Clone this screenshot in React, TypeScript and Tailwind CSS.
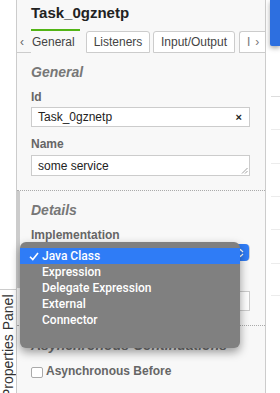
import React from "react";

const font = { fontFamily: '"Liberation Sans", Arial, sans-serif' };

function Label({ children }: { children: React.ReactNode }) {
  return <div className="text-[12px] font-bold leading-[16px] text-[#666]">{children}</div>;
}

function Heading({ children }: { children: React.ReactNode }) {
  return <div className="text-[14px] font-bold italic leading-[20px] text-[#777]">{children}</div>;
}

const options = ["Java Class", "Expression", "Delegate Expression", "External", "Connector"];

export default function App() {
  return (
    <div className="relative flex h-[393px] w-[280px] overflow-hidden bg-white" style={font}>
      {/* left strip with toggle tab */}
      <div className="flex w-[16px] flex-col">
        <div className="flex-1" />
        <div className="h-[104px] overflow-hidden border-t border-[#ccc] bg-white">
          <div className="h-[108px] rotate-180 text-[14px] leading-[16px] text-[#333] [writing-mode:vertical-rl]">
            Properties Panel
          </div>
        </div>
      </div>

      {/* panel */}
      <div className="flex w-[250px] flex-col border-x border-[#ccc] bg-[#f8f8f8]">
        <div className="pl-[14px] pt-[3px] text-[15px] font-bold leading-[20px] text-[#222]">Task_0gznetp</div>

        {/* tabs */}
        <div className="mt-[6px] flex h-[24px] items-end text-[12px] leading-[14px] text-[#444]">
          <div className="flex h-[22px] w-[14px] items-center border-b border-[#ccc] pl-[3px] text-[#666]">‹</div>
          <div className="flex h-[24px] w-[49px] items-center border-t-2 border-[#52b415] pl-[1px]">General</div>
          <div className="ml-[6px] flex h-[22px] w-[64px] items-center justify-center rounded-t-[3px] border border-[#ccc] bg-white">Listeners</div>
          <div className="ml-[3px] flex h-[22px] w-[82px] items-center justify-center rounded-t-[3px] border border-[#ccc] bg-white">Input/Output</div>
          <div className="ml-[4px] flex h-[22px] flex-1 items-center rounded-tl-[3px] border-y border-l border-[#ccc] bg-white pl-[7px] text-[#777]">
            <span>I</span>
            <span className="ml-[5px]">›</span>
          </div>
        </div>

        {/* General group */}
        <div className="border-b border-dotted border-[#aaa] pb-[14px] pl-[14px] pr-[15px]">
          <div className="mt-[9px]">
            <Heading>General</Heading>
          </div>
          <div className="mt-[7px]">
            <Label>Id</Label>
          </div>
          <div className="mt-[2px] flex h-[20px] items-center justify-between border border-[#ccc] bg-white pl-[6px] pr-[7px] text-[12px] text-[#222]">
            <span>Task_0gznetp</span>
            <span className="text-[11px] font-bold">×</span>
          </div>
          <div className="mt-[9px]">
            <Label>Name</Label>
          </div>
          <div className="relative mt-[3px] flex h-[21px] items-center border border-[#ccc] bg-white pl-[6px] text-[12px] text-[#222]">
            <span>some service</span>
            <svg className="absolute bottom-[1px] right-[1px]" width="7" height="7" viewBox="0 0 7 7">
              <path d="M1 6.5L6.5 1M4 6.5L6.5 4" stroke="#888" strokeWidth="0.8" />
            </svg>
          </div>
        </div>

        {/* Details group */}
        <div className="flex border-b border-dotted border-[#aaa]">
          <div className="h-[97px] w-[3px] shrink-0 bg-[#ccc]" />
          <div className="flex-1 pb-[14px] pl-[11px] pr-[15px]">
            <div className="mt-[9px]">
              <Heading>Details</Heading>
            </div>
            <div className="mt-[7px]">
              <Label>Implementation</Label>
            </div>
            <div className="mt-[1px] flex h-[17px] items-center justify-end rounded-[4px] border border-[#ccc] bg-white">
              <div className="flex h-[17px] w-[17px] items-center justify-center rounded-r-[4px] bg-[#2f7cf6]">
                <svg width="7" height="10" viewBox="0 0 7 10">
                  <path d="M1 4L3.5 1.5L6 4M1 6L3.5 8.5L6 6" stroke="white" strokeWidth="1.2" fill="none" />
                </svg>
              </div>
            </div>
            {/* label under the open menu is hidden in the shot */}
            <div className="mt-[12px] h-[16px]" />
            <div className="mt-[2px] h-[20px] border border-[#ccc] bg-white" />
          </div>
        </div>

        {/* Async group */}
        <div className="pl-[14px]">
          <div className="mt-[9px]">
            <Heading>Asynchronous Continuations</Heading>
          </div>
          <div className="mt-[8px] flex items-center">
            <div className="mt-[3px] h-[11px] w-[12px] rounded-[2px] border border-[#aaa] bg-white" />
            <span className="ml-[3px] text-[12px] font-bold leading-[16px] text-[#666]">Asynchronous Before</span>
          </div>
        </div>
      </div>

      {/* right strip */}
      <div className="flex flex-1 flex-col">
        <div className="ml-[4px] h-[46px] rounded-bl-[2px] bg-[#2d6fe0] shadow-[0_2px_5px_rgba(0,0,0,0.35)]" />
        <div className="mt-[50px] flex flex-col pl-[5px]">
          <div className="h-[33px] border-t border-[#ddd]" />
          <div className="h-[34px] border-t border-[#ececec]" />
          <div className="h-[33px] border-t border-[#ececec]" />
          <div className="h-[33px] border-t border-[#ececec]" />
          <div className="h-[34px] border-t border-[#ececec]" />
          <div className="h-[32px] border-t border-[#ececec]" />
          <div className="border-t border-[#ececec]" />
        </div>
      </div>

      {/* native select dropdown */}
      <div className="absolute left-[20px] top-[242px] h-[106px] w-[220px] rounded-[6px] bg-[#808080] pt-[6px] shadow-[0_4px_10px_rgba(0,0,0,0.4)]">
        {options.map((o, i) => (
          <div
            key={o}
            className={`flex h-[16px] items-center text-[12px] text-white ${i === 0 ? "bg-[#2f7cf6]" : ""}`}
            style={{ fontFamily: 'Roboto, "Liberation Sans", sans-serif', fontWeight: 500 }}
          >
            <span className="flex w-[22px] justify-center pl-[5px]">
              {i === 0 ? (
                <svg width="10" height="9" viewBox="0 0 10 9">
                  <path d="M1 4.8L3.8 7.6L9 1" stroke="white" strokeWidth="1.6" fill="none" />
                </svg>
              ) : null}
            </span>
            <span>{o}</span>
          </div>
        ))}
      </div>
    </div>
  );
}
